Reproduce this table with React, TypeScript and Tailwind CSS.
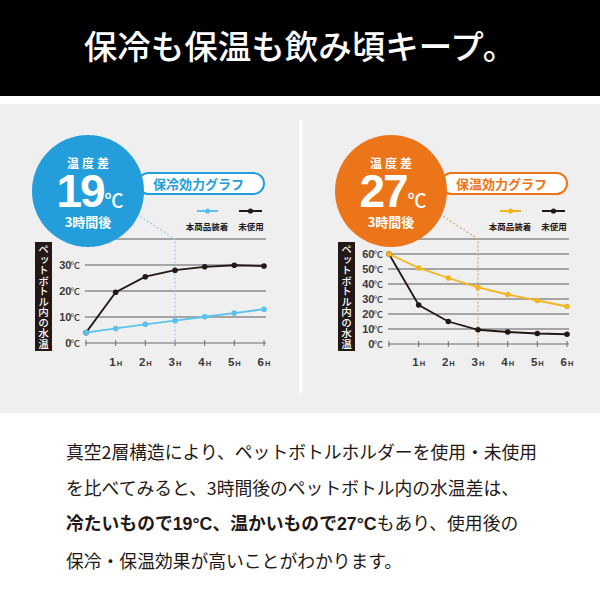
import React from "react";

const JP = '"Noto Sans CJK JP", "Noto Sans", sans-serif';
const NUM = '"Liberation Sans", Arial, sans-serif';
const XS = [86, 115.7, 145.3, 175, 204.7, 234.3, 264];

type Series = { color: string; data: number[] };

type PanelProps = {
  product: string;
  dash: string;
  bg: string;
  pill: string;
  title: string;
  diff: string;
  y0: number;
  k: number;
  ticks: number[];
  top: number;
  series: Series[];
};

function Chart({ product, dash, y0, k, ticks, top, series }: PanelProps) {
  const y = (v: number) => y0 - v * k;
  return (
    <svg className="absolute left-0 top-0" width="300" height="273" viewBox="0 0 300 273">
      {/* legend */}
      <line x1="197" y1="91" x2="218" y2="91" stroke={product} strokeWidth="2" />
      <circle cx="207.5" cy="91" r="2.6" fill={product} />
      <line x1="239" y1="91" x2="262" y2="91" stroke="#231815" strokeWidth="2" />
      <circle cx="250.5" cy="91" r="2.6" fill="#231815" />
      <text x="207" y="109.5" textAnchor="middle" fontSize="8.5" fontWeight="700" fill="#231815" fontFamily={JP}>本商品装着</text>
      <text x="251" y="109.5" textAnchor="middle" fontSize="8.5" fontWeight="700" fill="#231815" fontFamily={JP}>未使用</text>

      {/* grid */}
      <line x1="85" y1={y(top)} x2="266" y2={y(top)} stroke="#8c8c8c" strokeWidth="1.5" />
      {ticks.filter((t) => t > 0).map((t) => (
        <line key={t} x1="85" y1={y(t)} x2="266" y2={y(t)} stroke="#8c8c8c" strokeWidth="1.5" />
      ))}
      <line x1="85" y1={y0} x2="266" y2={y0} stroke="#6b6b6b" strokeWidth="1" />
      {XS.map((x) => (
        <line key={x} x1={x} y1={y0 - 3} x2={x} y2={y0 + 3} stroke="#6b6b6b" strokeWidth="1" />
      ))}

      {/* dashed pointer */}
      <polyline points={`130,90 175,${y(top)} 175,${y0}`} fill="none" stroke={dash} strokeWidth="1.2" strokeDasharray="2 2" />

      {/* y labels */}
      {ticks.map((t) => (
        <text key={t} x="80" y={y(t) + 4} textAnchor="end" fontSize="11" fontWeight="700" fill="#3a3a3a" fontFamily={NUM}>
          {t}
          <tspan fontSize="9.5" fontWeight="500" fontFamily={JP} dx="-1">℃</tspan>
        </text>
      ))}

      {/* x labels */}
      {XS.slice(1).map((x, i) => (
        <text key={x} x={x} y="246" textAnchor="middle" fontSize="11.5" fontWeight="700" fill="#3a3a3a" fontFamily={NUM}>
          {i + 1}
          <tspan fontSize="7.5" dx="1">H</tspan>
        </text>
      ))}

      {/* data */}
      {series.map((s) => (
        <g key={s.color}>
          <polyline points={s.data.map((v, i) => `${XS[i]},${y(v)}`).join(" ")} fill="none" stroke={s.color} strokeWidth="1.8" />
          {s.data.map((v, i) => (
            <circle key={i} cx={XS[i]} cy={y(v)} r="2.8" fill={s.color} />
          ))}
        </g>
      ))}
    </svg>
  );
}

function Panel(props: PanelProps) {
  const { bg, pill, title, diff } = props;
  return (
    <div className="relative w-[297px] h-[273px] shrink-0">
      <Chart {...props} />
      <div className={`absolute left-[137px] top-[52px] w-[128px] h-[23px] rounded-full border-2 bg-white flex items-center pl-[14px] text-[13px] font-bold ${pill}`}>
        {title}
      </div>
      <div className={`absolute left-[32px] top-[15px] w-[112px] h-[112px] rounded-full flex flex-col items-center text-white ${bg}`}>
        <span className="mt-[21px] text-[12px] leading-[14px] font-bold tracking-[3px] pl-[3px]">温度差</span>
        <div className="flex items-end mt-[4px] h-[34px] pl-[4px]">
          <span className="text-[46px] leading-[34px] font-bold tracking-[-2px] font-['Liberation_Sans',Arial,sans-serif]">{diff}</span>
          <span className="text-[19px] leading-[17px] font-medium ml-[1px]">℃</span>
        </div>
        <span className="mt-[6px] text-[13px] leading-[16px] font-bold">3時間後</span>
      </div>
      <div className="absolute left-[35px] top-[122px] w-[17px] h-[109px] bg-[#231815] text-white text-[10.5px] leading-[17px] flex items-center justify-center [writing-mode:vertical-rl] font-medium">
        ペットボトル内の水温
      </div>
    </div>
  );
}

export default function App() {
  return (
    <div className="w-[600px] h-[600px] bg-white overflow-hidden font-['Noto_Sans_CJK_JP','Noto_Sans',sans-serif]">
      <div className="h-[96px] bg-black flex items-center justify-center pb-[6px]">
        <h1 className="text-white text-[33.5px] font-medium">保冷も保温も飲み頃キープ。</h1>
      </div>
      <div className="mt-[8px] h-[309px] bg-[#efefef] pt-[16px]">
        <div className="flex">
          <Panel
            bg="bg-[#239edb]"
            pill="border-[#239edb] text-[#239edb]"
            product="#5cc1ee"
            dash="#8fcdee"
            title="保冷効力グラフ"
            diff="19"
            y0={223}
            k={2.6}
            ticks={[0, 10, 20, 30]}
            top={40}
            series={[
              { color: "#231815", data: [4, 19.5, 25.5, 28, 29.3, 29.9, 29.6] },
              { color: "#5cc1ee", data: [4, 5.6, 7.2, 8.6, 10.1, 11.5, 13] },
            ]}
          />
          <div className="w-[6px] flex justify-center shrink-0">
            <div className="w-[3px] h-[273px] bg-white" />
          </div>
          <Panel
            bg="bg-[#ec7519]"
            pill="border-[#ec7519] text-[#ec7519]"
            product="#f3b620"
            dash="#dba860"
            title="保温効力グラフ"
            diff="27"
            y0={224}
            k={1.5}
            ticks={[0, 10, 20, 30, 40, 50, 60]}
            top={70}
            series={[
              { color: "#231815", data: [60, 26, 15, 9.5, 8, 7, 6.5] },
              { color: "#f3b620", data: [60, 50.7, 44, 37.7, 33, 29, 25] },
            ]}
          />
        </div>
      </div>
      <div className="ml-[66px] mt-[21px] text-[17.8px] leading-[35.5px] text-[#231815] whitespace-nowrap">
        真空2層構造により、ペットボトルホルダーを使用・未使用
        <br />
        を比べてみると、3時間後のペットボトル内の水温差は、
        <br />
        <span className="font-bold">
          冷たいもので<span className="font-['Liberation_Sans',Arial,sans-serif]">19°C</span>、温かいもので
          <span className="font-['Liberation_Sans',Arial,sans-serif]">27°C</span>
        </span>
        もあり、使用後の
        <br />
        保冷・保温効果が高いことがわかります。
      </div>
    </div>
  );
}
